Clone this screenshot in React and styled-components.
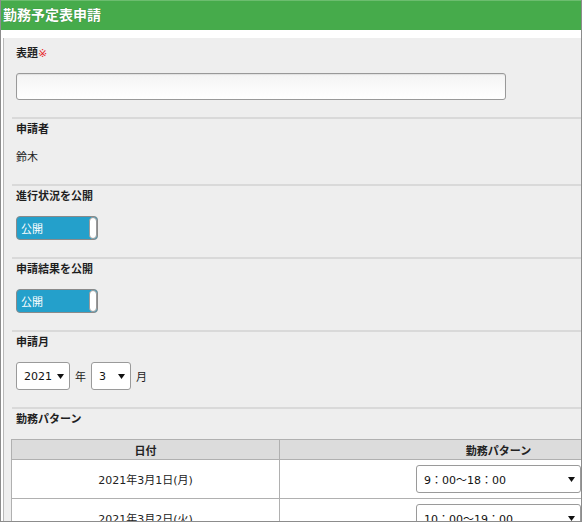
import React from "react"
import styled, { createGlobalStyle } from "styled-components"

const GlobalStyle = createGlobalStyle`
  html, body {
    margin: 0;
    padding: 0;
    background: #fff;
  }
  body {
    font-family: "DejaVu Sans", "Noto Sans CJK JP", sans-serif;
    font-size: 11px;
    color: #222;
  }
`

const StyledFrame = styled.div`
  width: 580px;
  height: 521px;
  overflow: hidden;
  border-left: 1px solid #8c8c8c;
  border-right: 1px solid #8c8c8c;
  border-bottom: 1px solid #8c8c8c;
  background: #fff;
`

const StyledHeader = styled.div`
  height: 30px;
  margin-left: -1px;
  background: #46ab4b;
  border-top: 1px solid #6cbd6f;
  box-sizing: border-box;
  color: #fff;
  font-size: 14px;
  font-weight: bold;
  line-height: 28px;
  padding-left: 3px;
  text-shadow: 0 0 1px rgba(0, 0, 0, 0.35);
`

const StyledBody = styled.div`
  padding: 8px 0 0 2px;
`

const StyledPanel = styled.div`
  width: 760px;
  min-height: 500px;
  background: #eeeeee;
  border-left: 1px solid #b9b9b9;
  padding: 5px 0 0 8px;
`

const StyledSection = styled.div`
  display: flex;
  flex-direction: column;
  align-items: flex-start;
  gap: 10px;
  padding: 2px 0 17px 4px;
  border-bottom: 2px solid #d9d9d9;
`

const StyledLabel = styled.div`
  font-weight: bold;
  line-height: 18px;
  color: #1e1e1e;
`

const StyledRequired = styled.span`
  color: #e8272b;
  font-weight: normal;
`

const StyledText = styled.div`
  line-height: 18px;
`

const StyledInput = styled.input`
  width: 490px;
  height: 27px;
  box-sizing: border-box;
  border: 1px solid #999;
  border-radius: 3px;
  background: linear-gradient(#f4f4f4, #ffffff);
  box-shadow: inset 0 1px 1px rgba(0, 0, 0, 0.08);
  outline: none;
`

const StyledSwitch = styled.div`
  width: 82px;
  height: 24px;
  box-sizing: border-box;
  display: flex;
  align-items: center;
  justify-content: space-between;
  background: #24a0cb;
  border: 1px solid #8a8a8a;
  border-radius: 4px;
  padding-left: 4px;
  color: #fff;
`

const StyledKnob = styled.div`
  width: 8px;
  height: 22px;
  box-sizing: border-box;
  background: #fff;
  border: 1px solid #9a9a9a;
  border-radius: 5px;
`

const StyledRow = styled.div`
  display: flex;
  align-items: center;
  gap: 5px;
`

const StyledSelect = styled.div`
  width: ${props => props.width}px;
  height: 28px;
  box-sizing: border-box;
  display: flex;
  align-items: center;
  justify-content: space-between;
  padding: 0 5px 0 7px;
  background: #fff;
  border: 1px solid #9a9a9a;
  border-radius: 3px;
  color: #111;
`

const StyledTable = styled.table`
  margin-left: -5px;
  width: 707px;
  border-collapse: collapse;
  background: #fff;

  th,
  td {
    border: 1px solid #b0b0b0;
    text-align: center;
    padding: 0;
  }

  th {
    height: 19px;
    background: #dcdcdc;
    font-weight: bold;
  }

  td {
    height: 38px;
  }
`

const StyledCell = styled.div`
  display: flex;
  justify-content: center;
`

const Arrow = () => (
  <svg width="7" height="5" viewBox="0 0 7 5">
    <polygon points="0,0 7,0 3.5,5" fill="#111" />
  </svg>
)

const Select = ({ width, value }) => (
  <StyledSelect width={width}>
    <span>{value}</span>
    <Arrow />
  </StyledSelect>
)

const Switch = () => (
  <StyledSwitch>
    <span>公開</span>
    <StyledKnob />
  </StyledSwitch>
)

const rows = [
  { date: "2021年3月1日(月)", pattern: "9：00～18：00" },
  { date: "2021年3月2日(火)", pattern: "10：00～19：00" },
]

const App = () => {
  return (
    <>
      <GlobalStyle />
      <StyledFrame>
        <StyledHeader>勤務予定表申請</StyledHeader>
        <StyledBody>
          <StyledPanel>
            <StyledSection>
              <StyledLabel>
                表題<StyledRequired>※</StyledRequired>
              </StyledLabel>
              <StyledInput type="text" />
            </StyledSection>
            <StyledSection>
              <StyledLabel>申請者</StyledLabel>
              <StyledText>鈴木</StyledText>
            </StyledSection>
            <StyledSection>
              <StyledLabel>進行状況を公開</StyledLabel>
              <Switch />
            </StyledSection>
            <StyledSection>
              <StyledLabel>申請結果を公開</StyledLabel>
              <Switch />
            </StyledSection>
            <StyledSection>
              <StyledLabel>申請月</StyledLabel>
              <StyledRow>
                <Select width={54} value="2021" />
                <span>年</span>
                <Select width={40} value="3" />
                <span>月</span>
              </StyledRow>
            </StyledSection>
            <StyledSection>
              <StyledLabel>勤務パターン</StyledLabel>
              <StyledTable>
                <thead>
                  <tr>
                    <th style={{ width: 267 }}>日付</th>
                    <th>勤務パターン</th>
                  </tr>
                </thead>
                <tbody>
                  {rows.map(row => (
                    <tr key={row.date}>
                      <td>{row.date}</td>
                      <td>
                        <StyledCell>
                          <Select width={165} value={row.pattern} />
                        </StyledCell>
                      </td>
                    </tr>
                  ))}
                </tbody>
              </StyledTable>
            </StyledSection>
          </StyledPanel>
        </StyledBody>
      </StyledFrame>
    </>
  )
}

export default App
